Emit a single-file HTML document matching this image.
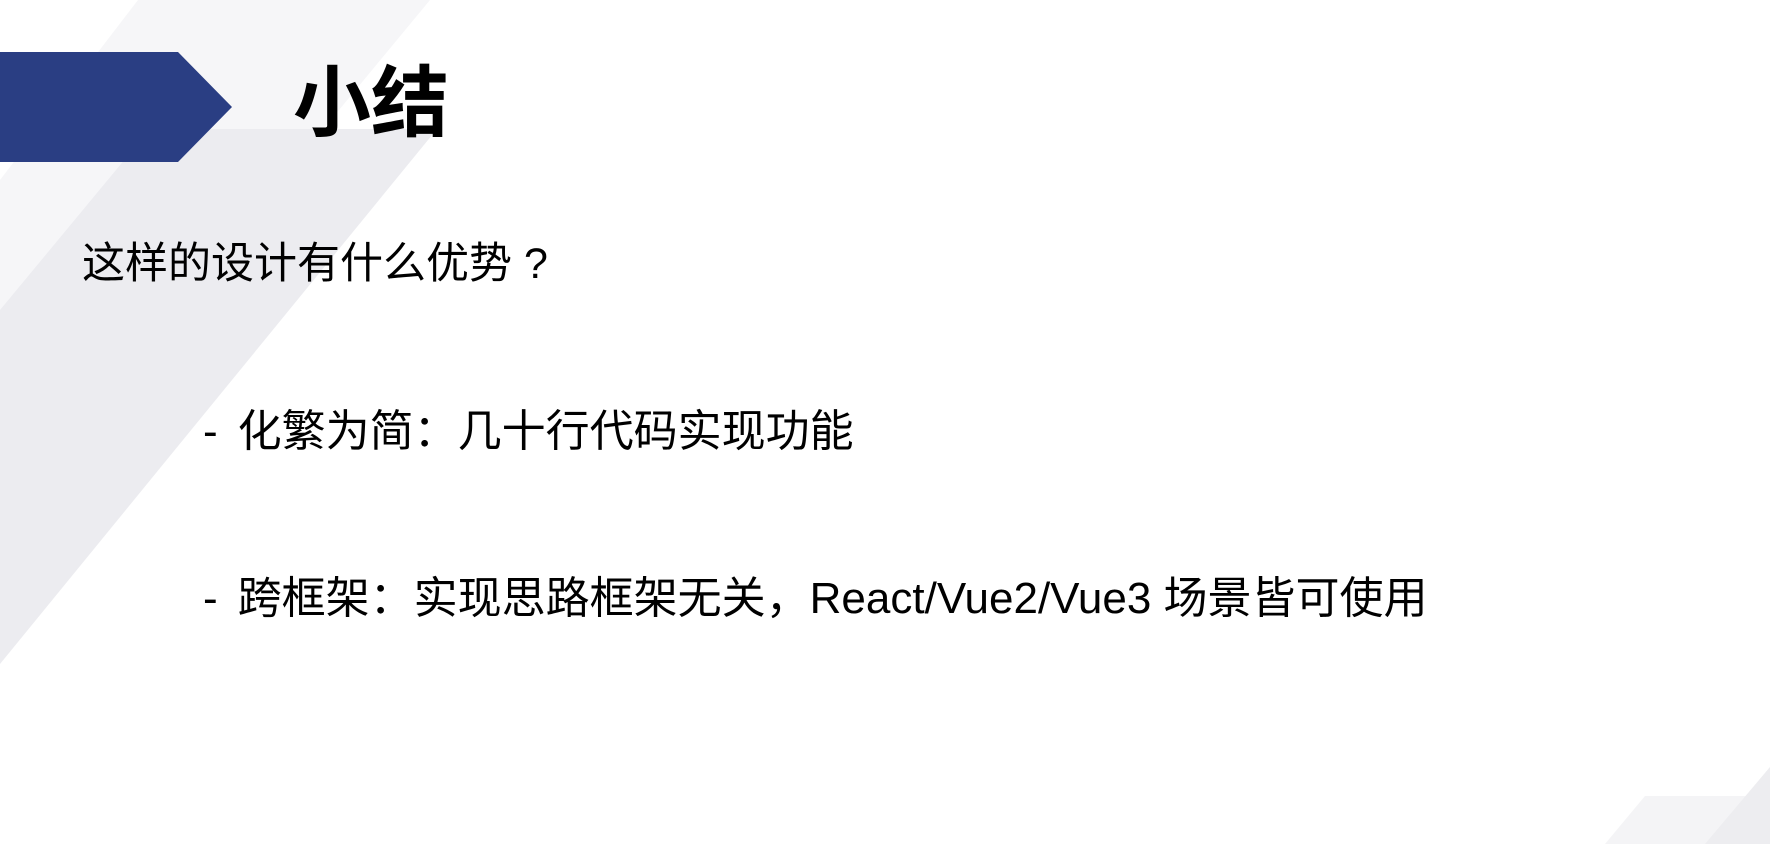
<!DOCTYPE html>
<html><head><meta charset="utf-8"><style>
html,body{margin:0;padding:0;}
body{width:1770px;height:844px;position:relative;overflow:hidden;background:#fff;font-family:"Liberation Sans","Noto Sans CJK SC",sans-serif;color:#000;}
svg{position:absolute;left:0;top:0;}
.t{position:absolute;white-space:nowrap;}
</style></head><body>
<svg width="1770" height="844">
<polygon points="138,0 430,0 0,520 0,180" fill="#f6f6f8"/>
<polygon points="150,129 437,129 0,664 0,310" fill="#ececf0"/>
<polygon points="0,52 178,52 232,107 178,162 0,162" fill="#2a3e83"/>
<polygon points="1645,796 1770,796 1770,844 1605,844" fill="#f4f4f6"/>
<polygon points="1770,767 1770,844 1705,844" fill="#ededf0"/>
</svg>
<div class="t" style="left:293px;top:53px;font-size:78px;font-weight:bold;line-height:100px;">小结</div>
<div class="t" style="left:82px;top:238px;font-size:43px;line-height:52px;">这样的设计有什么优势<span style="margin-left:12px">?</span></div>
<div class="t" style="left:203px;top:406px;font-size:44px;line-height:52px;">-<span style="display:inline-block;width:20px"></span>化繁为简：几十行代码实现功能</div>
<div class="t" style="left:203px;top:573px;font-size:44px;line-height:52px;">-<span style="display:inline-block;width:20px"></span>跨框架：实现思路框架无关，React/Vue2/Vue3 场景皆可使用</div>
</body></html>
